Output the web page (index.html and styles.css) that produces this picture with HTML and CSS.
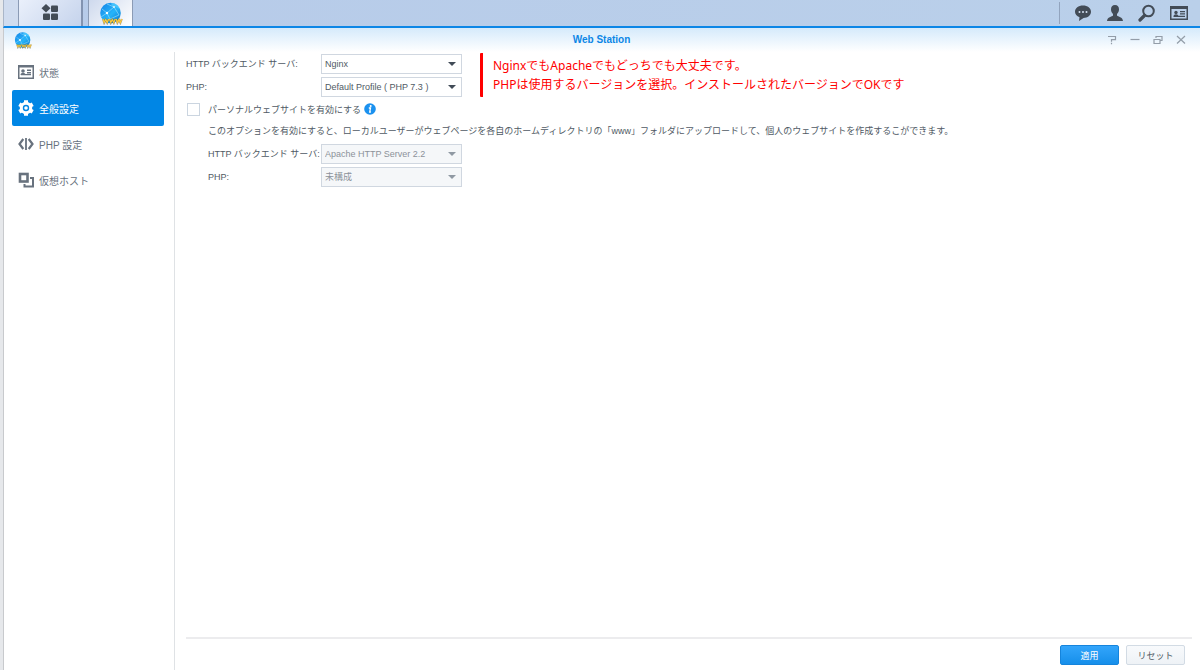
FILE: index.html
```html
<!DOCTYPE html>
<html lang="ja">
<head>
    <meta charset="UTF-8">
    <meta name="viewport" content="width=device-width, initial-scale=1.0">
    <title>Web Station</title>
    <link rel="stylesheet" href="styles.css">
</head>
<body>
    <!-- Shared globe icon -->
    <svg class="defs" aria-hidden="true">
        <defs>
            <linearGradient id="globeFill" x1="0" y1="0" x2="1" y2="1">
                <stop offset="0" stop-color="#1583e6"/>
                <stop offset="0.55" stop-color="#25b4fa"/>
                <stop offset="1" stop-color="#0c72c8"/>
            </linearGradient>
            <symbol id="globe" viewBox="0 0 24 24">
                <circle cx="11.5" cy="12" r="10.3" fill="url(#globeFill)"/>
                <path d="M12 2.500c4-1 8 2 9 6-2-2-5-3-7-2z" fill="#56cfff" opacity=".7"/>
                <path d="M3 8l5 4 7-6 5 8M8 12l3 6 9-4M15 6l-7-3M8 12l-6 4" fill="none" stroke="#9ee4ff" stroke-width=".6"/>
                <circle cx="8" cy="12" r="1.2" fill="#fff"/>
                <circle cx="15" cy="6" r="1" fill="#d8f5ff"/>
                <path d="M4 18l1.200 3.800 1.500-3 1.500 3L9.600 18M10.600 18l1.200 3.800 1.500-3 1.500 3 1.400-3.800M17.200 18l1.200 3.800 1.500-3 1.500 3 1.400-3.800" fill="none" stroke="#6f6334" stroke-width="2" opacity=".6"/>
                <path d="M4 18l1.200 3.500 1.500-3 1.500 3L9.600 18M10.600 18l1.200 3.500 1.500-3 1.500 3 1.400-3.500M17.200 18l1.200 3.500 1.500-3 1.500 3 1.400-3.500" fill="none" stroke="#ffc935" stroke-width="1.200"/>
            </symbol>
        </defs>
    </svg>

    <div class="desktop">
        <header class="taskbar">
            <button class="task task-menu" aria-label="メインメニュー">
                <svg width="18" height="18" viewBox="0 0 18 18" fill="#434c57"><path d="M5 0l4.500 4.300L5 8.600.5 4.300z"/><rect x="10" y="1.500" width="7" height="6.500" rx="1"/><rect x="2" y="9.500" width="7" height="6.500" rx="1"/><rect x="10" y="9.500" width="7" height="6.500" rx="1"/></svg>
            </button>
            <button class="task task-app" aria-label="Web Station">
                <svg width="24" height="24"><use href="#globe"/></svg>
            </button>
            <div class="tray">
                <button class="icon-btn" aria-label="チャット">
                    <svg width="18" height="18" viewBox="0 0 18 18"><path d="M9 1.500c4.600 0 8 2.600 8 6.300S13.600 14 9.500 14L5 17l.5-3.700C2.800 12.200 1 10.300 1 7.800c0-3.700 3.400-6.300 8-6.300z" fill="#434c57"/><g fill="#d5e1f2"><circle cx="5.500" cy="8" r="1"/><circle cx="9" cy="8" r="1"/><circle cx="12.500" cy="8" r="1"/></g></svg>
                </button>
                <button class="icon-btn" aria-label="ユーザー">
                    <svg width="18" height="18" viewBox="0 0 18 18" fill="#434c57"><path d="M9 1c2.700 0 4 1.700 4 4.300 0 2-.8 3.700-2 4.700v1.500c1 1.200 5.700 1.500 6 5.500H1c.3-4 5-4.300 6-5.500V10C5.800 9 5 7.300 5 5.300 5 2.700 6.300 1 9 1z"/></svg>
                </button>
                <button class="icon-btn" aria-label="検索">
                    <svg width="18" height="18" viewBox="0 0 18 18" fill="none" stroke="#434c57"><circle cx="10.500" cy="7" r="5.300" stroke-width="2"/><path d="M6.500 11.500L2 16" stroke-width="3.200" stroke-linecap="round"/></svg>
                </button>
                <button class="icon-btn" aria-label="ウィジェット">
                    <svg width="18" height="18" viewBox="0 0 18 18"><path d="M0 2h18v14H0zM1.500 5v9.500h15V5z" fill="#434c57" fill-rule="evenodd"/><g fill="#434c57"><circle cx="6" cy="8.500" r="1.700"/><path d="M3.500 12.500c0-3 5-3 5 0zM10 7h5v1.200h-5zM10 9.200h5v1.200h-5zM3.500 11.700H15V13H3.500z"/></g></svg>
                </button>
            </div>
        </header>

        <main class="window">
            <div class="titlebar">
                <svg width="18" height="18"><use href="#globe"/></svg>
                <h1>Web Station</h1>
                <div class="window-controls">
                    <button class="icon-btn" aria-label="ヘルプ">
                        <svg width="10" height="10" viewBox="0 0 10 10"><path d="M1 1.500h7.500v3.200H4.500v2M4.500 7.800v1.400"/></svg>
                    </button>
                    <button class="icon-btn" aria-label="最小化">
                        <svg width="10" height="10" viewBox="0 0 10 10"><path d="M0.500 4.500h9"/></svg>
                    </button>
                    <button class="icon-btn" aria-label="元に戻す">
                        <svg width="10" height="10" viewBox="0 0 10 10"><path d="M3 3V1.500h6v4H7.500M1 4.500h6M1 4v4.500h6V4"/></svg>
                    </button>
                    <button class="icon-btn" aria-label="閉じる">
                        <svg width="10" height="10" viewBox="0 0 10 10"><path d="M1 1l8 7.500M9 1L1 8.500"/></svg>
                    </button>
                </div>
            </div>

            <div class="body">
                <nav class="sidebar">
                    <a href="#" class="nav-item">
                        <svg width="16" height="16" viewBox="0 0 16 16" fill="currentColor"><path d="M0 1h16v14H0zM1.500 3.500v10h13v-10z" fill-rule="evenodd"/><circle cx="5" cy="7" r="1.800"/><path d="M2.500 11c0-3 5-3 5 0zM9 5.500h4v1.400H9zM9 8h4v1.400H9zM3 10h10v1.300H3z"/></svg>
                        状態
                    </a>
                    <a href="#" class="nav-item active">
                        <svg width="16" height="16" viewBox="0 0 16 16"><g fill="none" stroke="currentColor"><circle cx="8" cy="8" r="4.700" stroke-width="3"/><path d="M8 .3v3M8 12.700v3M1.300 4.200L4 5.700M12 10.300l2.700 1.500M1.300 11.800L4 10.300M12 5.700l2.700-1.500" stroke-width="4"/></g><circle cx="8" cy="8" r="1.800" fill="currentColor"/></svg>
                        全般設定
                    </a>
                    <a href="#" class="nav-item">
                        <svg width="16" height="16" viewBox="0 0 16 16" fill="none" stroke="currentColor" stroke-width="2.200"><path d="M5.300 3L1.500 8l3.800 5M10.700 3l3.800 5-3.800 5"/><path d="M8 2v12" stroke-width="1.800"/></svg>
                        PHP 設定
                    </a>
                    <a href="#" class="nav-item">
                        <svg width="16" height="16" viewBox="0 0 16 16" fill="none" stroke="currentColor"><rect x="2" y="2" width="7.500" height="7.500" stroke-width="2.600"/><path d="M12 6h3v8.500H6.500V12" stroke-width="2"/></svg>
                        仮想ホスト
                    </a>
                </nav>

                <form class="content">
                    <div class="settings">
                        <div class="fields">
                            <div class="field">
                                <label for="backend">HTTP バックエンド サーバ:</label>
                                <div class="select">
                                    <select id="backend"><option>Nginx</option></select>
                                </div>
                            </div>
                            <div class="field">
                                <label for="php">PHP:</label>
                                <div class="select">
                                    <select id="php"><option>Default Profile ( PHP 7.3 )</option></select>
                                </div>
                            </div>
                            <div class="check">
                                <input type="checkbox" id="personal">
                                <label for="personal">パーソナルウェブサイトを有効にする</label>
                                <svg width="12" height="12" viewBox="0 0 12 12"><circle cx="6" cy="6" r="5.800" fill="#1b91ef"/><circle cx="6.700" cy="3" r="1" fill="#fff"/><path d="M4.800 5h1.700l-.8 4h1.200" fill="none" stroke="#fff" stroke-width="1.300"/></svg>
                            </div>
                        </div>
                        <aside class="note">
                            <p>NginxでもApacheでもどっちでも大丈夫です。</p>
                            <p>PHPは使用するバージョンを選択。インストールされたバージョンでOKです</p>
                        </aside>
                    </div>

                    <div class="personal">
                        <p>このオプションを有効にすると、ローカルユーザーがウェブページを各自のホームディレクトリの「www」フォルダにアップロードして、個人のウェブサイトを作成するこができます。</p>
                        <div class="field">
                            <label for="userBackend">HTTP バックエンド サーバ:</label>
                            <div class="select">
                                <select id="userBackend" disabled><option>Apache HTTP Server 2.2</option></select>
                            </div>
                        </div>
                        <div class="field">
                            <label for="userPhp">PHP:</label>
                            <div class="select">
                                <select id="userPhp" disabled><option>未構成</option></select>
                            </div>
                        </div>
                    </div>

                    <div class="actions">
                        <button type="submit" class="btn btn-primary">適用</button>
                        <button type="reset" class="btn">リセット</button>
                    </div>
                </form>
            </div>
        </main>
    </div>
</body>
</html>
```
FILE: styles.css
```css
* {
    box-sizing: border-box;
}

body {
    margin: 0;
    font-family: "Liberation Sans", "Noto Sans CJK JP", sans-serif;
    font-size: 9px;
    color: #505a64;
    background: #e6e8eb;
}

p,
h1 {
    margin: 0;
}

button,
select {
    font: inherit;
    color: inherit;
}

svg {
    display: block;
    flex: none;
}

.defs {
    position: absolute;
    width: 0;
    height: 0;
}

.desktop {
    display: flex;
    flex-direction: column;
    min-height: 100vh;
    padding-left: 3px;
}

/* Taskbar */
.taskbar {
    display: flex;
    height: 28px;
    padding-left: 14px;
    background: linear-gradient(90deg, #d0dcef 15px, #b7cbe9 15px, #bad0ea);
    border-left: 1px solid #aab6c8;
    border-bottom: 2px solid #0c86e6;
}

.task {
    display: flex;
    align-items: center;
    justify-content: center;
    padding: 0;
    border: 0;
    border-left: 1px solid #8b9bb5;
}

.task-menu {
    width: 65px;
    margin-right: 5px;
    background: linear-gradient(135deg, #eaf0fb, #c5d3ec);
    border-right: 2px solid #8293b0;
}

.task-app {
    width: 45px;
    background: linear-gradient(135deg, #ced9ed, #fff);
    border-right: 1px solid #8b9bb5;
}

.tray {
    display: flex;
    align-items: center;
    gap: 14px;
    margin: 2px 12px 2px auto;
    padding-left: 14px;
    border-left: 1px solid #92a4be;
}

.icon-btn {
    padding: 0;
    border: 0;
    background: none;
}

/* Window */
.window {
    flex: 1;
    display: flex;
    flex-direction: column;
    background: #fff;
    border-left: 1px solid #c8cacd;
}

.titlebar {
    display: flex;
    align-items: center;
    justify-content: space-between;
    height: 24px;
    padding: 0 14px 0 10px;
    background: linear-gradient(#d5eafb, #fff);
}

.titlebar h1 {
    flex: 1;
    padding-left: 64px;
    font-size: 10px;
    line-height: 22px;
    color: #0c86e6;
    text-align: center;
}

.window-controls {
    display: flex;
    gap: 13px;
}

.window-controls path {
    fill: none;
    stroke: #939da8;
    stroke-width: 1.2;
}

.body {
    flex: 1;
    display: flex;
}

.sidebar {
    width: 171px;
    padding: 2px 10px 0 8px;
    border-right: 1px solid #dfe2e5;
}

.nav-item {
    display: flex;
    align-items: center;
    gap: 5px;
    height: 36px;
    padding-left: 6px;
    border-radius: 2px;
    font-size: 10px;
    color: #68727e;
    text-decoration: none;
}

.nav-item.active {
    color: #fff;
    background: #0086e5;
}

/* Settings form */
.content {
    flex: 1;
    display: flex;
    flex-direction: column;
    padding: 0 8px 5px 11px;
}

.settings {
    display: flex;
    align-items: flex-start;
    gap: 18px;
}

.field {
    display: flex;
    align-items: center;
    height: 23px;
}

.field label {
    width: 135px;
    white-space: nowrap;
}

.select {
    position: relative;
    width: 141px;
}

.select::after {
    content: "";
    position: absolute;
    top: 8px;
    right: 6px;
    border: 4px solid transparent;
    border-top-color: #414b57;
    border-bottom: 0;
    pointer-events: none;
}

.select:has(:disabled)::after {
    border-top-color: #9099a3;
}

select {
    display: block;
    width: 100%;
    height: 20px;
    padding: 0 16px 0 3px;
    appearance: none;
    border: 1px solid #d0d7e0;
    border-radius: 0;
    background: #fff;
}

select:disabled {
    color: #8c9299;
    background: #f5f7f9;
    opacity: 1;
}

.check {
    display: flex;
    align-items: center;
    height: 22px;
}

.check input {
    width: 13px;
    height: 13px;
    margin: 0 8px 0 1px;
    appearance: none;
    border: 1px solid #cbd5e0;
    background: #fff;
}

.check label {
    margin-right: 3px;
}

.note {
    margin-top: 1px;
    padding: 3px 0 3px 10px;
    border-left: 3px solid #f00;
    border-radius: 1px;
    font-family: "Noto Sans", "Noto Sans CJK JP", sans-serif;
    font-size: 12px;
    line-height: 19px;
    color: #f00;
}

.personal {
    padding-left: 22px;
}

.personal p {
    line-height: 22px;
}

.personal .field label {
    width: 113px;
}

.actions {
    display: flex;
    justify-content: flex-end;
    gap: 7px;
    margin-top: auto;
    padding: 6px 7px 0 0;
    border-top: 2px solid #ececee;
}

.btn {
    width: 59px;
    height: 20px;
    padding: 0;
    border: 1px solid #d2dbe4;
    border-radius: 2px;
    background: linear-gradient(#f8fafc, #eef2f6);
}

.btn-primary {
    border-color: #1584dc;
    color: #fff;
    background: linear-gradient(#33a5fb, #168fea);
}
```
